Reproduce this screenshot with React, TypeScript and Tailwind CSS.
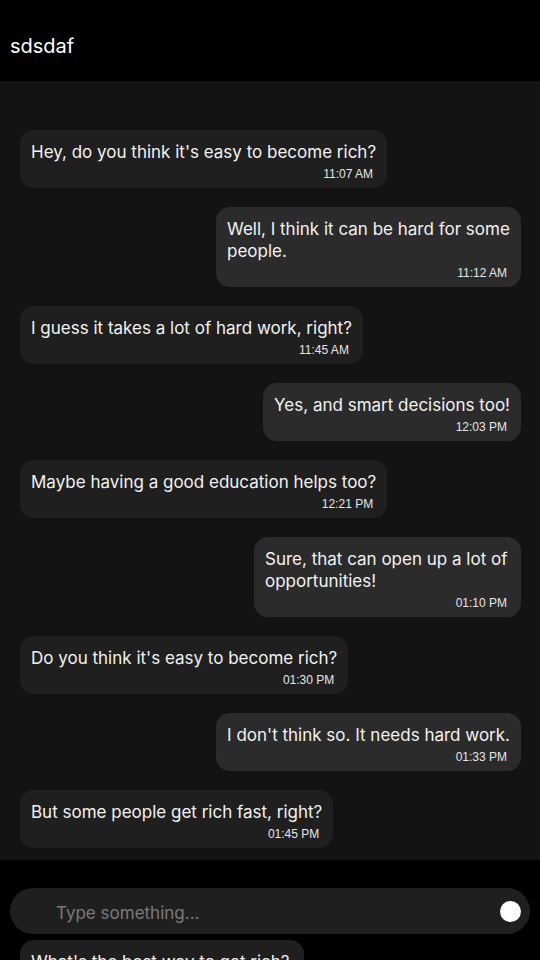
type Message = {
  text: string;
  time: string;
  mine: boolean;
  width?: string;
};

const messages: Message[] = [
  { text: "Hey, do you think it's easy to become rich?", time: "11:07 AM", mine: false },
  { text: "Well, I think it can be hard for some people.", time: "11:12 AM", mine: true, width: "w-[305px]" },
  { text: "I guess it takes a lot of hard work, right?", time: "11:45 AM", mine: false },
  { text: "Yes, and smart decisions too!", time: "12:03 PM", mine: true },
  { text: "Maybe having a good education helps too?", time: "12:21 PM", mine: false },
  { text: "Sure, that can open up a lot of opportunities!", time: "01:10 PM", mine: true, width: "w-[267px]" },
  { text: "Do you think it's easy to become rich?", time: "01:30 PM", mine: false },
  { text: "I don't think so. It needs hard work.", time: "01:33 PM", mine: true },
  { text: "But some people get rich fast, right?", time: "01:45 PM", mine: false },
];

function Bubble({ msg }: { msg: Message }) {
  return (
    <div className={`flex ${msg.mine ? "justify-end" : "justify-start"}`}>
      <div
        className={`flex flex-col rounded-[14px] pt-[11px] pb-[6px] px-[11px] ${
          msg.mine ? "bg-[#2b2b2b]" : "bg-[#1f1f1f]"
        } ${msg.width ?? ""}`}
      >
        <span className="font-['Inter',sans-serif] text-[17px] leading-[22px] text-[#f2f2f2]">
          {msg.text}
        </span>
        <span className="self-end pr-[3px] mt-[3px] font-['Liberation_Sans',Arial,sans-serif] text-[12px] leading-[16px] text-[#e6e6e6]">
          {msg.time}
        </span>
      </div>
    </div>
  );
}

export default function App() {
  return (
    <div className="w-[540px] h-[960px] overflow-hidden bg-black flex flex-col">
      {/* Header */}
      <header className="h-[81px] shrink-0 flex items-center px-[10px] bg-black">
        <span className="font-['Inter',sans-serif] text-[20px] text-white pt-[10px]">sdsdaf</span>
      </header>

      {/* Chat list */}
      <div className="h-[779px] shrink-0 overflow-hidden bg-[#131313] pt-[49px] pl-[20px] pr-[19px] flex flex-col gap-[19px]">
        {messages.map((m, i) => (
          <Bubble key={i} msg={m} />
        ))}
      </div>

      {/* Input */}
      <div className="flex-1 bg-black pt-[28px] px-[10px]">
        <div className="h-[46px] rounded-full bg-[#1f1f1f] flex items-center pl-[46px] pr-[9px]">
          <span className="flex-1 pt-[5px] font-['Inter',sans-serif] text-[17px] text-[#7a7a7a]">
            Type something...
          </span>
          <div className="w-[21px] h-[21px] rounded-full bg-white" />
        </div>
        <div className="mt-[6px] ml-[10px] w-[284px] rounded-[14px] bg-[#1f1f1f] pt-[10px] pl-[11px]">
          <span className="font-['Inter',sans-serif] text-[17px] leading-[22px] text-[#f2f2f2]">
            What's the best way to get rich?
          </span>
        </div>
      </div>
    </div>
  );
}
